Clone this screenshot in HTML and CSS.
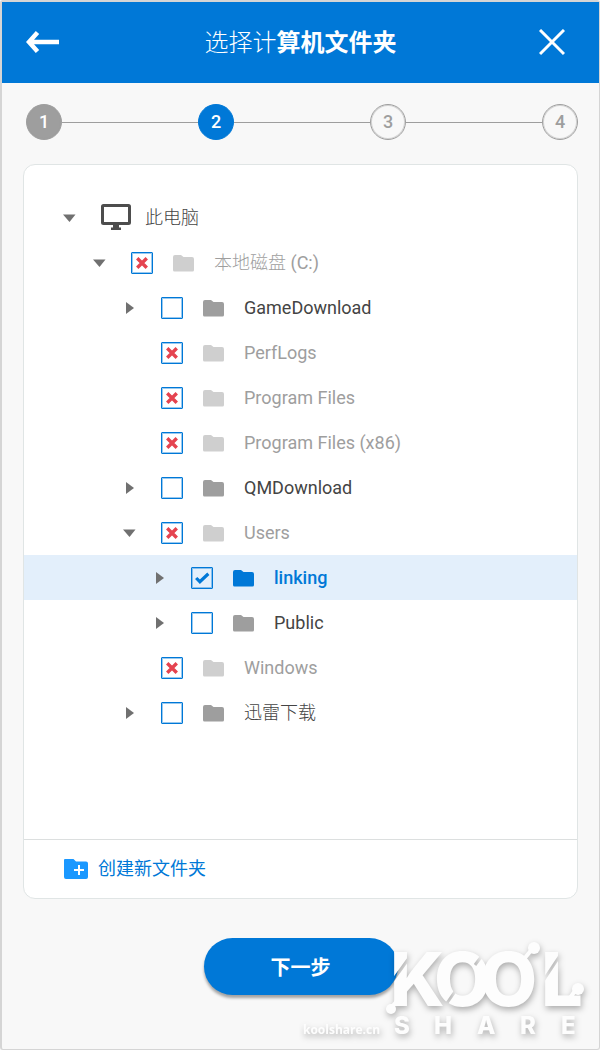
FILE: index.html
```html
<!DOCTYPE html>
<html lang="zh-CN">
<head>
  <meta charset="UTF-8" />
  <meta name="viewport" content="width=device-width, initial-scale=1" />
  <title>选择计算机文件夹</title>
  <link rel="stylesheet" href="styles.css">
</head>
<body>

  <!-- Shared icons -->
  <svg class="sprite" aria-hidden="true">
    <symbol id="arrow-down" viewBox="0 0 20 20"><path d="M2 6.500h12.500L8.500 14z" /></symbol>
    <symbol id="arrow-right" viewBox="0 0 20 20"><path d="M5 4v12l8-6z" /></symbol>
    <symbol id="folder" viewBox="0 0 21 18"><path d="M2 1h6l2.500 2H19a2 2 0 0 1 2 2v11a1.500 1.500 0 0 1-1.500 1.500h-18A1.500 1.500 0 0 1 0 16V3a2 2 0 0 1 2-2z" /></symbol>
  </svg>

  <div class="window">
    <header class="header">
      <button class="btn-icon" aria-label="返回">
        <svg width="34" height="24" viewBox="0 0 34 24"><path d="M11.500 1.500 3 11l8.500 9.500M3 11h30" fill="none" stroke="#fff" stroke-width="4.500" /></svg>
      </button>
      <h1>选择计<b>算机文件夹</b></h1>
      <button class="btn-icon btn-close" aria-label="关闭">
        <svg width="26" height="28" viewBox="0 0 26 28"><path d="M1 1l24 24M25 1 1 25" fill="none" stroke="#fff" stroke-width="3" /></svg>
      </button>
    </header>

    <div class="steps">
      <span class="step done">1</span>
      <span class="line"></span>
      <span class="step current">2</span>
      <span class="line"></span>
      <span class="step">3</span>
      <span class="line"></span>
      <span class="step">4</span>
    </div>

    <main class="card">
      <ul class="tree">
        <li class="row">
          <button class="toggle" aria-label="折叠"><svg><use href="#arrow-down" /></svg></button>
          <svg class="computer" viewBox="0 0 30 27"><path d="M2.500 0h25A2.500 2.500 0 0 1 30 2.500v16a2.500 2.500 0 0 1-2.500 2.500H18v2.500h2V26H10v-2.500h2V21H2.500A2.500 2.500 0 0 1 0 18.500v-16A2.500 2.500 0 0 1 2.500 0zM3 3v15h24V3z" fill-rule="evenodd" /></svg>
          <span class="name light">此电脑</span>
        </li>
        <li class="row level-1 blocked">
          <button class="toggle" aria-label="折叠"><svg><use href="#arrow-down" /></svg></button>
          <input type="checkbox" id="disk-c" disabled>
          <svg class="folder"><use href="#folder" /></svg>
          <label class="name" for="disk-c"><span class="light">本地磁盘</span> (C:)</label>
        </li>
        <li class="row level-2">
          <button class="toggle" aria-label="展开"><svg><use href="#arrow-right" /></svg></button>
          <input type="checkbox" id="game-download">
          <svg class="folder"><use href="#folder" /></svg>
          <label class="name" for="game-download">GameDownload</label>
        </li>
        <li class="row level-2 blocked">
          <span class="toggle"></span>
          <input type="checkbox" id="perf-logs" disabled>
          <svg class="folder"><use href="#folder" /></svg>
          <label class="name" for="perf-logs">PerfLogs</label>
        </li>
        <li class="row level-2 blocked">
          <span class="toggle"></span>
          <input type="checkbox" id="program-files" disabled>
          <svg class="folder"><use href="#folder" /></svg>
          <label class="name" for="program-files">Program Files</label>
        </li>
        <li class="row level-2 blocked">
          <span class="toggle"></span>
          <input type="checkbox" id="program-files-x86" disabled>
          <svg class="folder"><use href="#folder" /></svg>
          <label class="name" for="program-files-x86">Program Files (x86)</label>
        </li>
        <li class="row level-2">
          <button class="toggle" aria-label="展开"><svg><use href="#arrow-right" /></svg></button>
          <input type="checkbox" id="qm-download">
          <svg class="folder"><use href="#folder" /></svg>
          <label class="name" for="qm-download">QMDownload</label>
        </li>
        <li class="row level-2 blocked">
          <button class="toggle" aria-label="折叠"><svg><use href="#arrow-down" /></svg></button>
          <input type="checkbox" id="users" disabled>
          <svg class="folder"><use href="#folder" /></svg>
          <label class="name" for="users">Users</label>
        </li>
        <li class="row level-3 selected">
          <button class="toggle" aria-label="展开"><svg><use href="#arrow-right" /></svg></button>
          <input type="checkbox" id="linking" checked>
          <svg class="folder"><use href="#folder" /></svg>
          <label class="name" for="linking">linking</label>
        </li>
        <li class="row level-3">
          <button class="toggle" aria-label="展开"><svg><use href="#arrow-right" /></svg></button>
          <input type="checkbox" id="public">
          <svg class="folder"><use href="#folder" /></svg>
          <label class="name" for="public">Public</label>
        </li>
        <li class="row level-2 blocked">
          <span class="toggle"></span>
          <input type="checkbox" id="windows" disabled>
          <svg class="folder"><use href="#folder" /></svg>
          <label class="name" for="windows">Windows</label>
        </li>
        <li class="row level-2">
          <button class="toggle" aria-label="展开"><svg><use href="#arrow-right" /></svg></button>
          <input type="checkbox" id="xunlei">
          <svg class="folder"><use href="#folder" /></svg>
          <label class="name light" for="xunlei">迅雷下载</label>
        </li>
      </ul>

      <div class="card-footer">
        <button class="btn-create">
          <svg width="24" height="20" viewBox="0 0 24 20">
            <path d="M1 0h8.500L12 2.500h10a2 2 0 0 1 2 2V18a2 2 0 0 1-2 2H2a2 2 0 0 1-2-2V1a1 1 0 0 1 1-1z" fill="#1a98ff" />
            <path d="M15 6v10M10 11h10" stroke="#fff" stroke-width="2" />
          </svg>
          创建新文件夹
        </button>
      </div>
    </main>

    <button class="btn-next">下一步</button>

    <!-- Site watermark -->
    <svg class="watermark" width="300" height="130" viewBox="0 0 300 130" role="img" aria-label="KOOL SHARE koolshare.cn">
      <mask id="cuts">
        <rect width="300" height="130" fill="#fff" />
        <path d="M92 64 118 28M148 84l14-20M176 46l12-16M240 68l22-33" stroke="#000" stroke-width="3" />
      </mask>
      <g class="mark">
        <text mask="url(#cuts)"><tspan class="kool" x="91 135 181 242" y="87">KOOL</tspan><tspan class="share" x="95 135 178 221 262" y="115">SHARE</tspan></text>
        <path d="M91 90l7-8M234 29l-9 11M278 69l-7 10" />
        <circle cx="92" cy="90" r="5" />
        <circle cx="235" cy="29" r="6" />
        <circle cx="279" cy="70" r="6" />
        <text class="site" x="4" y="115">koolshare.cn</text>
      </g>
    </svg>
  </div>

</body>
</html>
```
FILE: styles.css
```css
/* Reset */
* {
  box-sizing: border-box;
  margin: 0;
  padding: 0;
}
body {
  background-color: #f8f8f8;
  color: #444;
  font-family: Roboto, "Noto Sans CJK SC", sans-serif;
  font-size: 18px;
}
button {
  background: none;
  border: none;
  font-family: inherit;
  cursor: pointer;
}
svg {
  display: block;
  flex-shrink: 0;
}
.sprite {
  position: absolute;
  width: 0;
  height: 0;
}

.window {
  position: relative;
  min-height: 100vh;
  display: flex;
  flex-direction: column;
  border: 1px solid #d5d5d5;
  border-top-width: 2px;
  border-left-width: 2px;
  border-radius: 3px;
}

/* Header */
.header {
  background-color: #0078d7;
  color: #fff;
  height: 81px;
  padding: 0 24px;
  display: flex;
  align-items: center;
  justify-content: space-between;
}
.header h1 {
  font-size: 24px;
  font-weight: 300;
  line-height: 28px;
}
.header b {
  font-weight: 700;
}
.btn-icon {
  width: 36px;
}
.btn-close svg {
  margin-left: auto;
  margin-right: 11px;
}

/* Steps */
.steps {
  display: flex;
  align-items: center;
  padding: 21px 21px 24px 24px;
}
.step {
  width: 36px;
  height: 36px;
  border: 1px solid #9e9e9e;
  border-radius: 50%;
  box-shadow: inset 0 0 0 1px rgba(158, 158, 158, 0.4);
  color: #9e9e9e;
  font-weight: 500;
  line-height: 34px;
  text-align: center;
}
.step.done {
  background-color: #9e9e9e;
  color: #fff;
}
.step.current {
  background-color: #0078d7;
  border-color: #0078d7;
  box-shadow: none;
  color: #fff;
}
.line {
  flex: 1;
  height: 1px;
  background-color: #9e9e9e;
}

/* Card */
.card {
  flex: 1;
  display: flex;
  flex-direction: column;
  margin: 0 21px;
  background-color: #fff;
  border: 1px solid #e0e5e5;
  border-radius: 12px;
}

/* Folder tree */
.tree {
  flex: 1;
  padding: 30px 0;
  list-style: none;
}
.row {
  display: flex;
  align-items: center;
  gap: 20px;
  height: 45px;
  padding-left: 37px;
}
.level-1 {
  padding-left: 67px;
}
.level-2 {
  padding-left: 97px;
}
.level-3 {
  padding-left: 127px;
}
.toggle,
.toggle svg {
  width: 20px;
  height: 20px;
  fill: #707070;
}
.computer {
  width: 30px;
  height: 27px;
  margin-right: -6px;
  fill: #4d4d4d;
}
.folder {
  width: 21px;
  height: 18px;
  fill: #9e9e9e;
}
.name {
  line-height: 20px;
}
.light {
  font-weight: 300;
}
.row input {
  appearance: none;
  width: 22px;
  height: 22px;
  border: 1px solid #0078d7;
  border-radius: 1px;
  background: center / 18px 18px no-repeat;
  box-shadow: inset 0 0 0 1px rgba(0, 120, 215, 0.4);
}
.row input:checked {
  background-image: url("data:image/svg+xml,%3Csvg xmlns='http://www.w3.org/2000/svg' viewBox='0 0 17 17'%3E%3Cpath d='M3 8.500l3.500 3.500L14.500 4.500' fill='none' stroke='%230078d7' stroke-width='3'/%3E%3C/svg%3E");
}
.blocked input {
  background-image: url("data:image/svg+xml,%3Csvg xmlns='http://www.w3.org/2000/svg' viewBox='0 0 17 17'%3E%3Cpath d='M4 4l9 9M13 4l-9 9' fill='none' stroke='%23e5434f' stroke-width='3.200'/%3E%3C/svg%3E");
}
.blocked .name {
  color: #9e9e9e;
}
.blocked .folder {
  fill: #cfcfcf;
}
.selected {
  background-color: #e3effb;
}
.selected .name {
  color: #0078d7;
  font-weight: 500;
}
.selected .folder {
  fill: #0078d7;
}

/* Create folder */
.card-footer {
  border-top: 1px solid #dcdfdf;
  padding: 14px 40px;
}
.btn-create {
  display: flex;
  align-items: center;
  gap: 10px;
  height: 30px;
  color: #0078d7;
  font-size: 18px;
  line-height: 20px;
}

/* Next button */
.btn-next {
  align-self: center;
  width: 194px;
  height: 57px;
  margin: 39px 0 54px;
  border-radius: 29px;
  background-color: #0078d7;
  box-shadow: 0 3px 3px rgba(0, 0, 0, 0.35);
  color: #fff;
  font-size: 20px;
  font-weight: 700;
}

/* Watermark */
.watermark {
  position: absolute;
  right: 0;
  bottom: 0;
  pointer-events: none;
}
.mark {
  fill: #fdfdfd;
  filter: drop-shadow(1px 3px 3px rgba(0, 0, 0, 0.3));
}
.mark > path {
  stroke: #fdfdfd;
  stroke-width: 4px;
}
.kool {
  font-family: Inter, sans-serif;
  font-size: 74px;
  font-weight: 800;
}
.share {
  font-family: Inter, sans-serif;
  font-size: 24px;
  font-weight: 800;
}
.site {
  font-family: "Open Sans", sans-serif;
  font-size: 12px;
  font-weight: 700;
}
```
